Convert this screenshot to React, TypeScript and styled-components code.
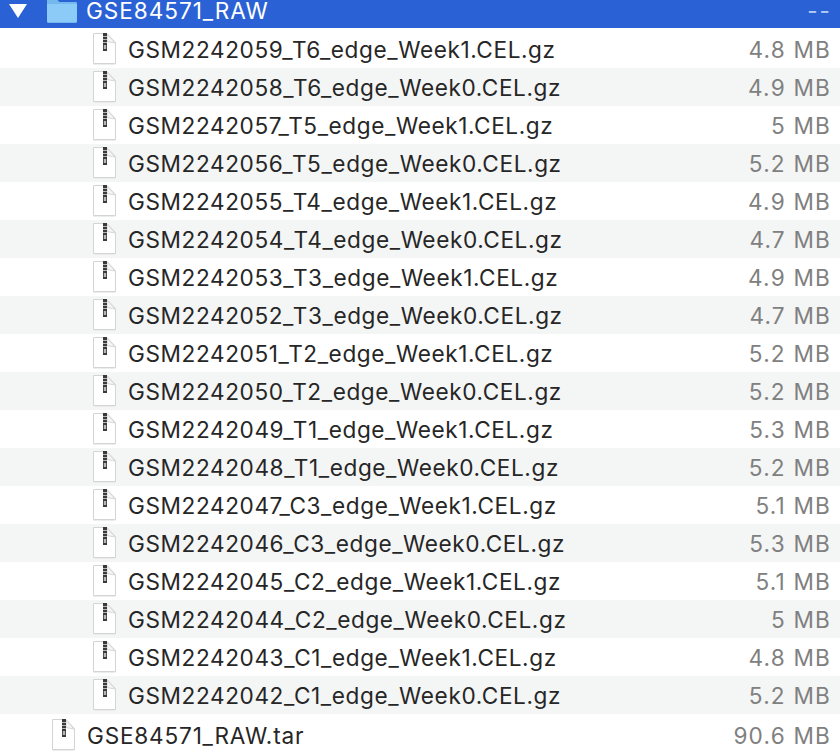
import styled, { createGlobalStyle } from "styled-components";

const files = [
  ["GSM2242059_T6_edge_Week1.CEL.gz", "4.8 MB"],
  ["GSM2242058_T6_edge_Week0.CEL.gz", "4.9 MB"],
  ["GSM2242057_T5_edge_Week1.CEL.gz", "5 MB"],
  ["GSM2242056_T5_edge_Week0.CEL.gz", "5.2 MB"],
  ["GSM2242055_T4_edge_Week1.CEL.gz", "4.9 MB"],
  ["GSM2242054_T4_edge_Week0.CEL.gz", "4.7 MB"],
  ["GSM2242053_T3_edge_Week1.CEL.gz", "4.9 MB"],
  ["GSM2242052_T3_edge_Week0.CEL.gz", "4.7 MB"],
  ["GSM2242051_T2_edge_Week1.CEL.gz", "5.2 MB"],
  ["GSM2242050_T2_edge_Week0.CEL.gz", "5.2 MB"],
  ["GSM2242049_T1_edge_Week1.CEL.gz", "5.3 MB"],
  ["GSM2242048_T1_edge_Week0.CEL.gz", "5.2 MB"],
  ["GSM2242047_C3_edge_Week1.CEL.gz", "5.1 MB"],
  ["GSM2242046_C3_edge_Week0.CEL.gz", "5.3 MB"],
  ["GSM2242045_C2_edge_Week1.CEL.gz", "5.1 MB"],
  ["GSM2242044_C2_edge_Week0.CEL.gz", "5 MB"],
  ["GSM2242043_C1_edge_Week1.CEL.gz", "4.8 MB"],
  ["GSM2242042_C1_edge_Week0.CEL.gz", "5.2 MB"],
];

const ArchiveIcon = () => (
  <svg width="26" height="32" viewBox="0 0 26 32">
    <path d="M3.5 0.5H17L25.500 9.500V30.500H3.500Z" fill="#fff" stroke="#d4d4d4" strokeWidth="1" />
    <path d="M3.500 31.500H25.500" stroke="#ececec" strokeWidth="1" />
    <path d="M17 1V8.500L25 10Z" fill="#f5f5f5" stroke="#d8d8d8" strokeWidth="1" />
    <rect x="13" y="0" width="4" height="18" fill="#3a3a3a" />
    <path d="M13 3.500H17M13 6.500H17M13 9.500H17" stroke="#b5b5b5" strokeWidth="1" />
    <rect x="13.800" y="12" width="2.400" height="4" fill="#b5b5b5" />
  </svg>
);

const FolderIcon = () => (
  <svg width="30" height="23" viewBox="0 0 30 23">
    <path d="M0 0H10.500L12.500 2H29a1 1 0 0 1 1 1V21.500a1.500 1.500 0 0 1-1.500 1.500H1.500A1.500 1.500 0 0 1 0 21.500Z" fill="#74b9ee" />
    <path d="M0 4H30V21a1 1 0 0 1-1 1H1a1 1 0 0 1-1-1Z" fill="#8ccbf8" />
  </svg>
);

const App = () => (
  <>
    <GlobalStyle />
    <Listing>
      <FolderRow>
        <Disclosure />
        <FolderIcon />
        <FolderName>GSE84571_RAW</FolderName>
        <FolderSize>--</FolderSize>
      </FolderRow>
      <Rows>
        {files.map(([name, size], index) => (
          <FileRow key={name} $shaded={index % 2 === 1} $indent={90}>
            <ArchiveIcon />
            <FileName>{name}</FileName>
            <FileSize>{size}</FileSize>
          </FileRow>
        ))}
        <ArchiveRow $indent={49}>
          <ArchiveIcon />
          <WideFileName>GSE84571_RAW.tar</WideFileName>
          <FileSize>90.6 MB</FileSize>
        </ArchiveRow>
      </Rows>
    </Listing>
  </>
);

const GlobalStyle = createGlobalStyle`
  html, body {
    margin: 0;
    background: #fff;
  }

  body {
    font-family: "Inter", "Liberation Sans", sans-serif;
    font-size: 22.6px;
    letter-spacing: 0.6px;
  }
`;

const Listing = styled.div`
  width: 840px;
  height: 754px;
  overflow: hidden;
`;

const FolderRow = styled.div`
  display: flex;
  align-items: flex-start;
  height: 28px;
  padding: 0 10px 0 9px;
  box-sizing: border-box;
  background: #2a62d6;
  color: #fff;
`;

const Disclosure = styled.span`
  width: 0;
  height: 0;
  margin: 4px 20px 0 0;
  border-left: 9px solid transparent;
  border-right: 9px solid transparent;
  border-top: 14px solid #fff;
`;

const FolderName = styled.span`
  margin-left: 9px;
  line-height: 22px;
  letter-spacing: 0.95px;
`;

const FolderSize = styled.span`
  margin: 0 -2px 0 auto;
  line-height: 22px;
  letter-spacing: 2px;
  color: #b4ccf4;
`;

const Rows = styled.div`
  padding-top: 2px;
`;

const FileRow = styled.div<{ $shaded?: boolean; $indent: number }>`
  display: flex;
  align-items: center;
  height: 38px;
  padding: 0 10px 0 ${(props) => props.$indent}px;
  box-sizing: border-box;
  background: ${(props) => (props.$shaded ? "#f4f5f5" : "#fff")};
`;

const ArchiveRow = styled(FileRow)`
  margin-top: 2px;
`;

const FileName = styled.span`
  margin-left: 12px;
  color: #262626;
`;

const WideFileName = styled(FileName)`
  letter-spacing: 0.8px;
`;

const FileSize = styled.span`
  margin: 0 -1px 0 auto;
  letter-spacing: 1.2px;
  color: #808080;
`;

export default App;
